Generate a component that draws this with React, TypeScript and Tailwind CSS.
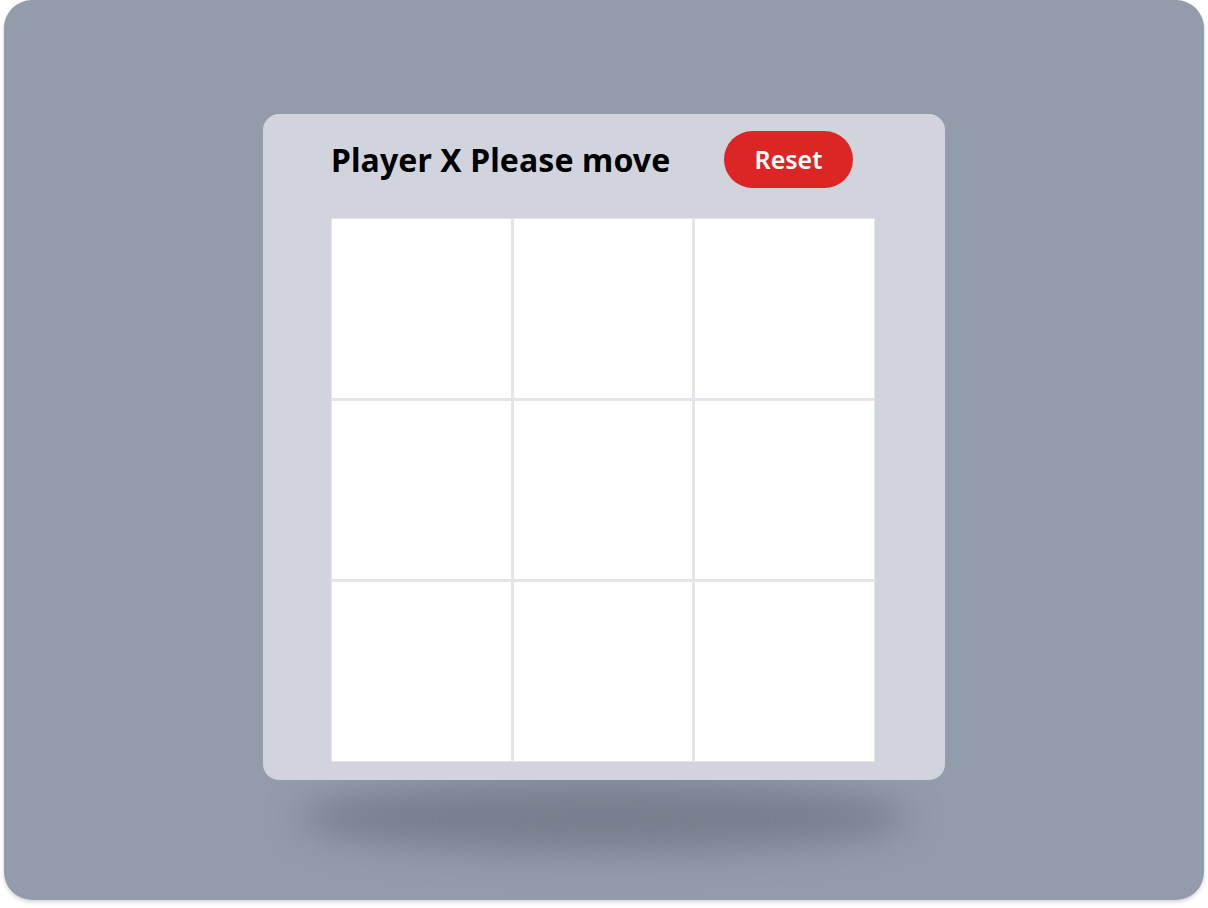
import React from "react";

export default function App() {
  const cells = Array.from({ length: 9 });
  return (
    <div className="w-[1208px] h-[908px] bg-white" style={{ fontFamily: '"Noto Sans", "Open Sans", sans-serif' }}>
      <div className="ml-[4px] w-[1200px] h-[900px] rounded-[28px] bg-[#939cab] shadow-[0_2px_4px_rgba(0,0,0,0.18)] flex justify-center pt-[114px]">
        <div className="relative w-[682px] h-[666px]">
          <div className="absolute left-[34px] top-[668px] w-[614px] h-[70px] rounded-[50%] bg-[#5b6270] opacity-50 blur-[18px]" />
          <div className="relative w-full h-full rounded-[16px] bg-[#d1d4dc] pl-[68px] pr-[70px] pt-[17px]">
            <div className="flex items-center h-[57px]">
              <h1 className="text-[32px] font-bold text-black leading-none tracking-[0.1px]">Player X Please move</h1>
              <button className="ml-auto mr-[22px] w-[129px] h-[57px] rounded-full bg-[#dc2626] text-white text-[25px] font-semibold">
                Reset
              </button>
            </div>
            <div className="mt-[30px] w-[544px] h-[544px] grid grid-cols-3 grid-rows-3 gap-[3px] p-[1px] bg-[#e4e5e9]">
              {cells.map((_, i) => (
                <div key={i} className="bg-white" />
              ))}
            </div>
          </div>
        </div>
      </div>
    </div>
  );
}
